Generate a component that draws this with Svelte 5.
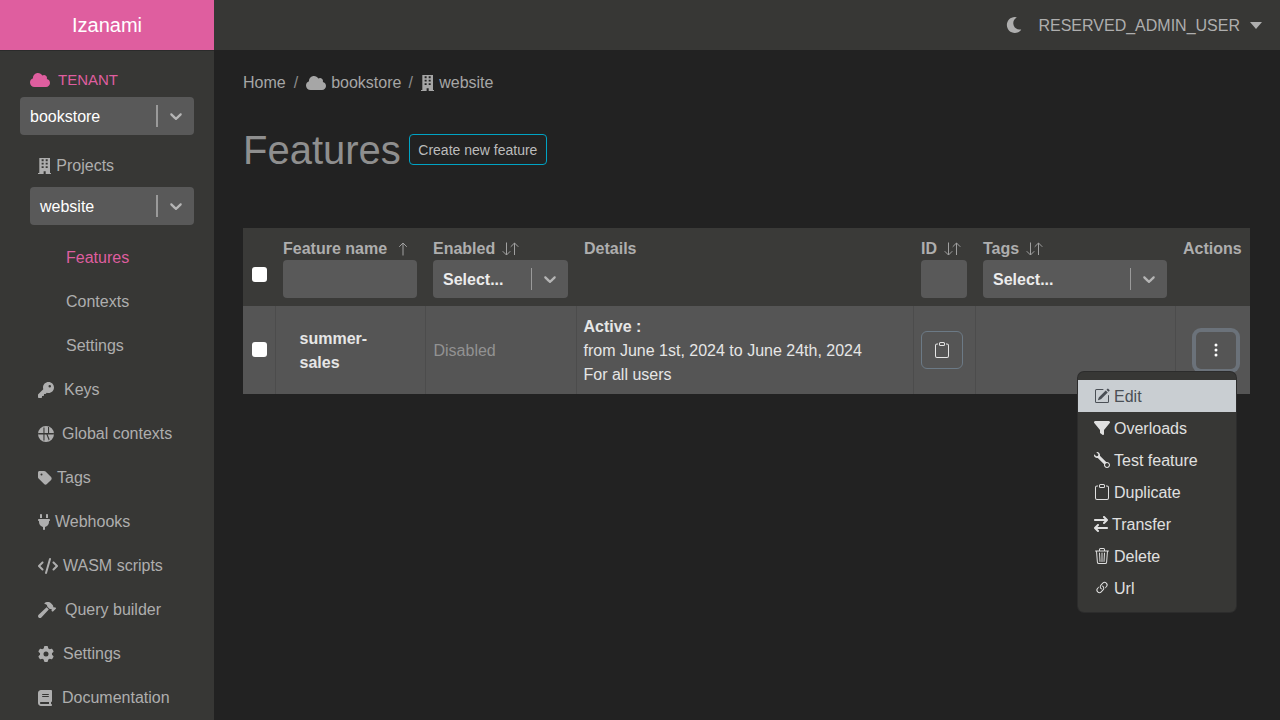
<script>
  const icons = {
    cloud: { w: 640, h: 512, d: 'M0 336c0 79.5 64.5 144 144 144H512c70.7 0 128-57.3 128-128c0-61.9-44-113.6-102.4-125.4c4.1-10.7 6.4-22.4 6.4-34.6c0-53-43-96-96-96c-19.7 0-38.1 6-53.3 16.2C367 64.2 315.3 32 256 32C167.6 32 96 103.6 96 192c0 2.7 .1 5.4 .2 8.1C40.2 219.8 0 273.2 0 336z' },
    building: { w: 426, h: 512, d: 'M42 0H384V480H426V512H246V420H180V512H0V480H42ZM116 40V100H180V40ZM246 40V100H310V40ZM116 150V210H180V150ZM246 150V210H310V150ZM116 260V320H180V260ZM246 260V320H310V260Z' },
    key: { w: 512, h: 512, d: 'M336 352c97.2 0 176-78.8 176-176S433.2 0 336 0S160 78.8 160 176c0 18.7 2.9 36.8 8.3 53.7L7 391c-4.5 4.5-7 10.6-7 17v80c0 13.3 10.7 24 24 24h80c13.3 0 24-10.7 24-24V448h40c13.3 0 24-10.7 24-24V384h40c6.4 0 12.5-2.5 17-7l33.3-33.3c16.9 5.4 35 8.3 53.7 8.3zM376 96a40 40 0 1 1 0 80 40 40 0 1 1 0-80z' },
    globe: { w: 16, h: 16, d: 'M8 0a8 8 0 1 1 0 16A8 8 0 0 1 8 0ZM.2 7H15.8V8.4H.2ZM5.4 1.4H6.5V7H5.4ZM5.4 8.4H6.5V14.6H5.4ZM10 .9H11.1V7H10ZM8.4 8.4H9.6L11.6 13.2 10.8 14.6Z' },
    tag: { w: 448, h: 512, d: 'M0 80V229.5c0 17 6.7 33.3 18.7 45.3l176 176c25 25 65.5 25 90.5 0L418.7 317.3c25-25 25-65.5 0-90.5l-176-176c-12-12-28.3-18.7-45.3-18.7H48C21.5 32 0 53.5 0 80zm112 32a32 32 0 1 1 0 64 32 32 0 1 1 0-64z' },
    plug: { w: 384, h: 512, d: 'M96 0C78.3 0 64 14.3 64 32v96h64V32c0-17.7-14.3-32-32-32zM288 0c-17.7 0-32 14.3-32 32v96h64V32c0-17.7-14.3-32-32-32zM32 160c-17.7 0-32 14.3-32 32s14.3 32 32 32v32c0 77.4 55 142 128 156.8V480c0 17.7 14.3 32 32 32s32-14.3 32-32V412.8C297 398 352 333.4 352 256V224c17.7 0 32-14.3 32-32s-14.3-32-32-32H32z' },
    code: { w: 640, h: 512, d: 'M392.8 1.2c-17-4.9-34.7 5-39.6 22l-128 448c-4.9 17 5 34.7 22 39.6s34.7-5 39.6-22l128-448c4.9-17-5-34.7-22-39.6zm80.6 120.1c-12.5 12.5-12.5 32.8 0 45.3L562.7 256l-89.4 89.4c-12.5 12.5-12.5 32.8 0 45.3s32.8 12.5 45.3 0l112-112c12.5-12.5 12.5-32.8 0-45.3l-112-112c-12.5-12.5-32.8-12.5-45.3 0zm-306.7 0c-12.5-12.5-32.8-12.5-45.3 0l-112 112c-12.5 12.5-12.5 32.8 0 45.3l112 112c12.5 12.5 32.8 12.5 45.3 0s12.5-32.8 0-45.3L77.3 256l89.4-89.4c12.5-12.5 12.5-32.8 0-45.3z' },
    hammer: { w: 576, h: 512, d: 'M571.31 193.94l-22.63-22.63c-6.25-6.25-16.38-6.25-22.63 0l-11.31 11.31-28.9-28.9c5.63-21.31.36-44.9-16.35-61.61l-45.25-45.25c-62.48-62.48-163.79-62.48-226.28 0l90.51 45.25v18.75c0 16.97 6.74 33.25 18.75 45.25l49.14 49.14c16.71 16.71 40.3 21.98 61.61 16.35l28.9 28.9-11.31 11.31c-6.25 6.25-6.25 16.38 0 22.63l22.63 22.63c6.25 6.25 16.38 6.25 22.63 0l90.51-90.51c6.23-6.24 6.23-16.37-.02-22.62zm-286.72-15.2c-3.7-3.7-6.84-7.79-9.85-11.95L19.64 404.96c-25.57 23.88-26.26 64.19-1.53 88.93s65.05 24.05 88.93-1.53l238.13-255.07c-3.96-2.91-7.9-5.87-11.44-9.41l-49.14-49.14z' },
    gear: { w: 512, h: 512, d: 'M495.9 166.6c3.2 8.7 .5 18.4-6.4 24.6l-43.3 39.4c1.1 8.3 1.7 16.8 1.7 25.4s-.6 17.1-1.7 25.4l43.3 39.4c6.9 6.2 9.6 15.9 6.4 24.6c-4.4 11.9-9.7 23.3-15.8 34.3l-4.7 8.1c-6.6 11-14 21.4-22.1 31.2c-5.9 7.2-15.7 9.6-24.5 6.8l-55.7-17.7c-13.4 10.3-28.2 18.9-44 25.4l-12.5 57.1c-2 9.1-9 16.3-18.2 17.8c-13.8 2.3-28 3.5-42.5 3.5s-28.7-1.2-42.5-3.5c-9.2-1.5-16.2-8.7-18.2-17.8l-12.5-57.1c-15.8-6.5-30.6-15.1-44-25.4L83.1 425.9c-8.8 2.8-18.6 .3-24.5-6.8c-8.1-9.8-15.5-20.2-22.1-31.2l-4.7-8.1c-6.1-11-11.4-22.4-15.8-34.3c-3.2-8.7-.5-18.4 6.4-24.6l43.3-39.4C64.6 273.1 64 264.6 64 256s.6-17.1 1.7-25.4L22.4 191.2c-6.9-6.2-9.6-15.9-6.4-24.6c4.4-11.9 9.7-23.3 15.8-34.3l4.7-8.1c6.6-11 14-21.4 22.1-31.2c5.9-7.2 15.7-9.6 24.5-6.8l55.7 17.7c13.4-10.3 28.2-18.9 44-25.4l12.5-57.1c2-9.1 9-16.3 18.2-17.8C227.3 1.2 241.5 0 256 0s28.7 1.2 42.5 3.5c9.2 1.5 16.2 8.7 18.2 17.8l12.5 57.1c15.8 6.5 30.6 15.1 44 25.4l55.7-17.7c8.8-2.8 18.6-.3 24.5 6.8c8.1 9.8 15.5 20.2 22.1 31.2l4.7 8.1c6.1 11 11.4 22.4 15.8 34.3zM256 336a80 80 0 1 0 0-160 80 80 0 1 0 0 160z' },
    book: { w: 448, h: 512, d: 'M96 0C43 0 0 43 0 96V416c0 53 43 96 96 96H384h32c17.7 0 32-14.3 32-32s-14.3-32-32-32V384c17.7 0 32-14.3 32-32V32c0-17.7-14.3-32-32-32H384 96zm0 384H352v64H96c-17.7 0-32-14.3-32-32s14.3-32 32-32zm32-240c0-8.8 7.2-16 16-16H336c8.8 0 16 7.2 16 16s-7.2 16-16 16H144c-8.8 0-16-7.2-16-16zm16 48H336c8.8 0 16 7.2 16 16s-7.2 16-16 16H144c-8.8 0-16-7.2-16-16s7.2-16 16-16z' },
    moon: { w: 512, h: 512, d: 'M283.211 512c78.962 0 151.079-35.925 198.857-94.792 7.068-8.708-.639-21.43-11.562-19.35-124.203 23.654-238.262-71.576-238.262-196.954 0-72.222 38.662-138.635 101.498-174.394 9.686-5.512 7.25-20.197-3.756-22.23A258.156 258.156 0 0 0 283.211 0c-141.309 0-256 114.511-256 256 0 141.309 114.511 256 256 256z' },
    filter: { w: 512, h: 512, d: 'M3.9 54.9C10.5 40.9 24.5 32 40 32H472c15.5 0 29.5 8.9 36.1 22.9s4.6 30.5-5.2 42.5L320 320.9V448c0 12.1-6.8 23.2-17.7 28.6s-23.8 4.3-33.5-3l-64-48c-8.1-6-12.8-15.5-12.8-25.6V320.9L9 97.3C-.7 85.4-2.8 68.8 3.9 54.9z' },
    transfer: { w: 448, h: 512, d: 'M438.6 150.6c12.5-12.5 12.5-32.8 0-45.3l-96-96c-12.5-12.5-32.8-12.5-45.3 0s-12.5 32.8 0 45.3L338.7 96 32 96C14.3 96 0 110.3 0 128s14.3 32 32 32l306.7 0-41.4 41.4c-12.5 12.5-12.5 32.8 0 45.3s32.8 12.5 45.3 0l96-96zm-333.3 352c12.5 12.5 32.8 12.5 45.3 0s12.5-32.8 0-45.3L109.3 416 416 416c17.7 0 32-14.3 32-32s-14.3-32-32-32l-306.7 0 41.4-41.4c12.5-12.5 12.5-32.8 0-45.3s-32.8-12.5-45.3 0l-96 96c-12.5 12.5-12.5 32.8 0 45.3l96 96z' },
    pencil: { w: 16, h: 16, d: 'M15.502 1.94a.5.5 0 0 1 0 .706L14.459 3.69l-2-2L13.502.646a.5.5 0 0 1 .707 0l1.293 1.293zm-1.75 2.456-2-2L4.939 9.21a.5.5 0 0 0-.121.196l-.805 2.414a.25.25 0 0 0 .316.316l2.414-.805a.5.5 0 0 0 .196-.12l6.813-6.814zM1 13.5A1.5 1.5 0 0 0 2.5 15h11a1.5 1.5 0 0 0 1.5-1.5v-6a.5.5 0 0 0-1 0v6a.5.5 0 0 1-.5.5h-11a.5.5 0 0 1-.5-.5v-11a.5.5 0 0 1 .5-.5H9a.5.5 0 0 0 0-1H2.5A1.5 1.5 0 0 0 1 2.5v11z' },
    clipboard: { w: 16, h: 16, d: 'M4 1.5H3a2 2 0 0 0-2 2V14a2 2 0 0 0 2 2h10a2 2 0 0 0 2-2V3.5a2 2 0 0 0-2-2h-1v1h1a1 1 0 0 1 1 1V14a1 1 0 0 1-1 1H3a1 1 0 0 1-1-1V3.5a1 1 0 0 1 1-1h1v-1zM9.5 1a.5.5 0 0 1 .5.5v1a.5.5 0 0 1-.5.5h-3a.5.5 0 0 1-.5-.5v-1a.5.5 0 0 1 .5-.5h3zm-3-1A1.5 1.5 0 0 0 5 1.5v1A1.5 1.5 0 0 0 6.5 4h3A1.5 1.5 0 0 0 11 2.5v-1A1.5 1.5 0 0 0 9.5 0h-3z' },
    trash: { w: 16, h: 16, d: 'M6.5 1h3a.5.5 0 0 1 .5.5v1H6v-1a.5.5 0 0 1 .5-.5ZM11 2.5v-1A1.5 1.5 0 0 0 9.5 0h-3A1.5 1.5 0 0 0 5 1.5v1H2.506a.58.58 0 0 0-.01 0H1.5a.5.5 0 0 0 0 1h.538l.853 10.66A2 2 0 0 0 4.885 16h6.23a2 2 0 0 0 1.994-1.84l.853-10.66h.538a.5.5 0 0 0 0-1h-.995a.59.59 0 0 0-.01 0H11Zm1.958 1-.846 10.58a1 1 0 0 1-.997.92h-6.23a1 1 0 0 1-.997-.92L3.042 3.5h9.916Zm-7.487 1a.5.5 0 0 1 .528.47l.5 8.5a.5.5 0 0 1-.998.06L5 5.03a.5.5 0 0 1 .47-.53Zm5.058 0a.5.5 0 0 1 .47.53l-.5 8.5a.5.5 0 1 1-.998-.06l.5-8.5a.5.5 0 0 1 .528-.47ZM8 4.5a.5.5 0 0 1 .5.5v8.5a.5.5 0 0 1-1 0V5a.5.5 0 0 1 .5-.5Z' },
    wrench: { w: 16, h: 16, d: 'M.102 2.223A3.004 3.004 0 0 0 3.78 5.897l6.341 6.252A3.003 3.003 0 0 0 13 16a3 3 0 1 0-.851-5.878L5.897 3.781A3.004 3.004 0 0 0 2.223.1l2.141 2.142L4 4l-1.757.364L.102 2.223zm13.37 9.019.528.026.287.445.445.287.026.529L15 13l-.242.471-.026.529-.445.287-.287.445-.529.026L13 15l-.471-.242-.529-.026-.287-.445-.445-.287-.026-.529L11 13l.242-.471.026-.529.445-.287.287-.445.529-.026L13 11l.471.242z' },
    link: { w: 16, h: 16, d: 'M4.715 6.542 3.343 7.914a3 3 0 1 0 4.243 4.243l1.828-1.829A3 3 0 0 0 8.586 5.5L8 6.086a1.002 1.002 0 0 0-.154.199 2 2 0 0 1 .861 3.337L6.88 11.45a2 2 0 1 1-2.83-2.83l.793-.792a4.018 4.018 0 0 1-.128-1.287zM6.586 4.672A3 3 0 0 0 7.414 9.5l.775-.776a2 2 0 0 1-.896-3.346L9.12 3.55a2 2 0 1 1 2.83 2.83l-.793.792c.112.42.155.855.128 1.287l1.372-1.372a3 3 0 1 0-4.243-4.243L6.586 4.672z' }
  }

  const subNav = [
    { label: 'Features', active: true },
    { label: 'Contexts' },
    { label: 'Settings' }
  ]

  const mainNav = [
    { label: 'Keys', icon: 'key', gap: 10 },
    { label: 'Global contexts', icon: 'globe', gap: 8 },
    { label: 'Tags', icon: 'tag', gap: 5 },
    { label: 'Webhooks', icon: 'plug', gap: 5 },
    { label: 'WASM scripts', icon: 'code', gap: 5 },
    { label: 'Query builder', icon: 'hammer', gap: 9 },
    { label: 'Settings', icon: 'gear', gap: 9 },
    { label: 'Documentation', icon: 'book', gap: 10 }
  ]

  const menu = [
    { label: 'Edit', icon: 'pencil', active: true },
    { label: 'Overloads', icon: 'filter' },
    { label: 'Test feature', icon: 'wrench' },
    { label: 'Duplicate', icon: 'clipboard' },
    { label: 'Transfer', icon: 'transfer' },
    { label: 'Delete', icon: 'trash' },
    { label: 'Url', icon: 'link' }
  ]
</script>

{#snippet icon(name, size = 16)}
  <svg class="icon" viewBox="0 0 {icons[name].w} {icons[name].h}" height={size} width={(size * icons[name].w) / icons[name].h}>
    <path d={icons[name].d} fill="currentColor" fill-rule="evenodd" />
  </svg>
{/snippet}

{#snippet select(label, cls = '')}
  <div class="select {cls}">
    <span class="select-value">{label}</span>
    <span class="select-sep"></span>
    <svg class="select-chevron" viewBox="0 0 20 20" width="20" height="20">
      <path fill="currentColor" d="M4.516 7.548c0.436-0.446 1.043-0.481 1.576 0l3.908 3.747 3.908-3.747c0.533-0.481 1.141-0.446 1.576 0 0.436 0.445 0.408 1.197 0 1.615-0.406 0.418-4.695 4.502-4.695 4.502-0.217 0.223-0.502 0.335-0.789 0.335s-0.572-0.112-0.79-0.335c0 0-4.287-4.084-4.695-4.502s-0.436-1.17 0-1.615z" />
    </svg>
  </div>
{/snippet}

{#snippet sortBoth()}
  <svg class="sort" viewBox="0 0 17 14" width="17" height="14" fill="none" stroke="currentColor">
    <path d="M4.5 0.5V13M.7 9.2 4.5 13l3.8-3.8M12.5 13V1M8.7 4.8 12.5 1l3.8 3.8" />
  </svg>
{/snippet}

<div class="layout">
  <header class="topbar">
    <div class="brand">Izanami</div>
    <div class="user">
      <span class="moon">{@render icon('moon')}</span>
      <span class="user-name">RESERVED_ADMIN_USER</span>
      <span class="caret"></span>
    </div>
  </header>

  <div class="body">
    <nav class="sidebar">
      <div class="tenant">
        {@render icon('cloud')}
        <span>TENANT</span>
      </div>
      {@render select('bookstore')}

      <div class="nav-link projects">
        {@render icon('building')}
        <span>Projects</span>
      </div>
      {@render select('website', 'inset')}

      <ul class="sub-nav">
        {#each subNav as item}
          <li class:active={item.active}>{item.label}</li>
        {/each}
      </ul>

      <ul class="main-nav">
        {#each mainNav as item}
          <li class="nav-link">
            {@render icon(item.icon)}
            <span style:margin-left="{item.gap}px">{item.label}</span>
          </li>
        {/each}
      </ul>
    </nav>

    <main class="content">
      <div class="breadcrumb">
        <span>Home</span>
        <span class="slash">/</span>
        {@render icon('cloud')}
        <span class="crumb-text">bookstore</span>
        <span class="slash">/</span>
        {@render icon('building')}
        <span class="crumb-text">website</span>
      </div>

      <div class="title-row">
        <h1>Features</h1>
        <button class="create">Create new feature</button>
      </div>

      <table>
        <colgroup>
          <col class="c-check" />
          <col class="c-name" />
          <col class="c-enabled" />
          <col class="c-details" />
          <col class="c-id" />
          <col class="c-tags" />
          <col class="c-actions" />
        </colgroup>
        <thead>
          <tr>
            <th class="check"><input type="checkbox" /></th>
            <th>
              <div class="th-title">Feature name
                <svg class="sort single" viewBox="0 0 10 14" width="10" height="14" fill="none" stroke="currentColor">
                  <path d="M5 13.5V1M1.2 4.8 5 1l3.8 3.8" />
                </svg>
              </div>
              <div class="filter-input"></div>
            </th>
            <th>
              <div class="th-title">Enabled {@render sortBoth()}</div>
              {@render select('Select...', 'filter')}
            </th>
            <th class="top"><div class="th-title">Details</div></th>
            <th>
              <div class="th-title">ID {@render sortBoth()}</div>
              <div class="filter-input"></div>
            </th>
            <th>
              <div class="th-title">Tags {@render sortBoth()}</div>
              {@render select('Select...', 'filter')}
            </th>
            <th class="top"><div class="th-title">Actions</div></th>
          </tr>
        </thead>
        <tbody>
          <tr>
            <td class="check"><input type="checkbox" /></td>
            <td class="name text"><div>summer-sales</div></td>
            <td class="disabled text">Disabled</td>
            <td class="text">
              <strong>Active :</strong><br />
              from June 1st, 2024 to June 24th, 2024<br />
              For all users
            </td>
            <td><button class="copy">{@render icon('clipboard')}</button></td>
            <td></td>
            <td class="actions">
              <button class="kebab" aria-label="Actions">
                <svg viewBox="0 0 16 16" width="16" height="16"><path fill="currentColor" d="M9.5 13a1.5 1.5 0 1 1-3 0 1.5 1.5 0 0 1 3 0zm0-5a1.5 1.5 0 1 1-3 0 1.5 1.5 0 0 1 3 0zm0-5a1.5 1.5 0 1 1-3 0 1.5 1.5 0 0 1 3 0z" /></svg>
              </button>
              <ul class="menu">
                {#each menu as item}
                  <li class:active={item.active}>
                    {@render icon(item.icon)}
                    <span>{item.label}</span>
                  </li>
                {/each}
              </ul>
            </td>
          </tr>
        </tbody>
      </table>
    </main>
  </div>
</div>

<style>
  :global(body) {
    background: #222222;
    font-family: "Liberation Sans", Arial, sans-serif;
    font-size: 16px;
    line-height: 24px;
    overflow: hidden;
  }

  .layout {
    height: 720px;
    display: flex;
    flex-direction: column;
    overflow: hidden;
  }

  .icon {
    flex: none;
    display: block;
  }

  .topbar {
    height: 50px;
    flex: none;
    display: flex;
    align-items: center;
    justify-content: space-between;
    background: #373735;
  }

  .brand {
    width: 214px;
    height: 50px;
    background: #df5e9f;
    color: #fff;
    font-size: 20px;
    line-height: 50px;
    text-align: center;
  }

  .user {
    display: flex;
    align-items: center;
    padding-right: 18px;
    color: #aeaeae;
  }

  .moon {
    margin-right: 16px;
  }

  .user-name {
    padding-top: 2px;
  }

  .caret {
    margin-left: 10px;
    border: 6px solid transparent;
    border-top: 7px solid #aeaeae;
    border-bottom: 0;
  }

  .body {
    flex: 1;
    display: flex;
    min-height: 0;
  }

  .sidebar {
    width: 214px;
    flex: none;
    box-sizing: border-box;
    background: #373735;
    border-top: 1px solid #2b2b2b;
    padding: 17px 20.5px 0 20px;
    color: #aeaeae;
  }

  .tenant {
    display: flex;
    align-items: center;
    gap: 8px;
    height: 24px;
    margin-left: 10px;
    margin-bottom: 5px;
    color: #df5e9f;
    font-size: 15px;
  }

  .select {
    height: 38px;
    display: flex;
    align-items: center;
    background: #595959;
    border-radius: 4px;
    color: #fff;
    padding: 0 8px 0 10px;
  }

  .select.inset {
    margin-left: 10px;
  }

  .select.filter {
    font-weight: 700;
    color: #ececec;
  }

  .select-value {
    flex: 1;
    padding-top: 2px;
  }

  .select-sep {
    width: 1.5px;
    height: 22px;
    background: #9a9a9a;
    margin-right: 8px;
  }

  .select-chevron {
    color: #b5b5b5;
  }

  .nav-link {
    display: flex;
    align-items: center;
    height: 44px;
    padding-left: 18px;
  }

  .projects {
    gap: 5px;
    height: 24px;
    margin: 19px 0 9px;
  }

  ul {
    list-style: none;
    margin: 0;
    padding: 0;
  }

  .sub-nav {
    margin-top: 11px;
  }

  .sub-nav li {
    height: 44px;
    line-height: 44px;
    padding-left: 46px;
  }

  .sub-nav li.active {
    color: #df5e9f;
  }

  .content {
    flex: 1;
    min-width: 0;
    padding: 21px 30px 0 29px;
  }

  .breadcrumb {
    display: flex;
    align-items: center;
    gap: 4px;
    height: 24px;
    color: #a6a6a6;
  }

  .slash {
    margin: 0 4px;
    color: #8c8c8c;
  }

  .crumb-text {
    margin-left: 1px;
  }

  .crumb-text + .slash {
    margin-left: 3px;
  }

  .title-row {
    display: flex;
    align-items: center;
    gap: 8px;
    margin-top: 32px;
    height: 46px;
  }

  h1 {
    margin: 0;
    font-size: 40px;
    font-weight: 400;
    line-height: 46px;
    color: #8f8f8f;
  }

  .create {
    height: 31px;
    width: 138px;
    margin-top: -2px;
    padding: 2px 0 0;
    background: transparent;
    border: 1px solid #00a3c4;
    border-radius: 4px;
    color: #bcbcbc;
    font: 14px "Liberation Sans", Arial, sans-serif;
  }

  table {
    width: 1007px;
    table-layout: fixed;
    border-collapse: collapse;
    margin-top: 55px;
  }

  .c-check { width: 32px; }
  .c-name { width: 150px; }
  .c-enabled { width: 151px; }
  .c-details { width: 337px; }
  .c-id { width: 62px; }
  .c-tags { width: 200px; }
  .c-actions { width: 75px; }

  th {
    background: #3a3a38;
    color: #aeaeae;
    text-align: left;
    padding: 8px;
    vertical-align: top;
  }

  th.check {
    padding: 14px 0 0 9px;
    vertical-align: middle;
  }

  td.check {
    padding: 0 0 2px 9px;
    vertical-align: middle;
  }

  input[type='checkbox'] {
    display: block;
    appearance: none;
    width: 15px;
    height: 15px;
    margin: 0;
    background: #fff;
    border-radius: 3px;
  }

  .th-title {
    display: flex;
    align-items: center;
    gap: 7px;
    height: 24px;
    padding-top: 1px;
    margin-bottom: -1px;
    white-space: nowrap;
  }

  .sort {
    flex: none;
    color: #a0a0a0;
  }

  .sort.single {
    margin-left: 4px;
  }

  .filter-input {
    height: 38px;
    background: #595959;
    border-radius: 4px;
  }

  td {
    position: relative;
    height: 88px;
    box-sizing: border-box;
    padding: 8px 7px;
    background: #555555;
    color: #e6e6e6;
    border-left: 1px solid #4c4c4c;
    vertical-align: middle;
  }

  td.text {
    padding-top: 9px;
    padding-bottom: 7px;
  }

  td.check {
    border-left: 0;
  }

  td.name {
    padding-left: 24px;
    font-weight: 700;
  }

  td.name div {
    width: 80px;
  }

  td.disabled {
    padding-left: 8px;
    color: #929292;
  }

  .copy {
    display: flex;
    align-items: center;
    justify-content: center;
    width: 42px;
    height: 38px;
    padding: 0;
    background: transparent;
    border: 1px solid #6c7a86;
    border-radius: 6px;
    color: #e6e6e6;
  }

  .kebab {
    display: flex;
    align-items: center;
    justify-content: center;
    width: 40px;
    height: 37px;
    margin-left: 13px;
    padding: 0;
    background: #555555;
    border: 0;
    border-radius: 5px;
    box-shadow: 0 0 0 4px #6b727a;
    color: #fff;
  }

  .menu {
    position: absolute;
    top: 66px;
    right: 14px;
    width: 158px;
    box-sizing: border-box;
    padding: 8px 0;
    background: #373735;
    box-shadow: 0 0 0 1px #2c2c2c;
    border-radius: 6px;
    z-index: 5;
  }

  .menu li {
    display: flex;
    align-items: center;
    gap: 4px;
    height: 32px;
    padding: 0 16px;
    color: #e0e0e0;
  }

  .menu li span {
    padding-top: 2px;
  }

  .menu li.active {
    background: #c9ced2;
    color: #4a4f55;
  }
</style>
